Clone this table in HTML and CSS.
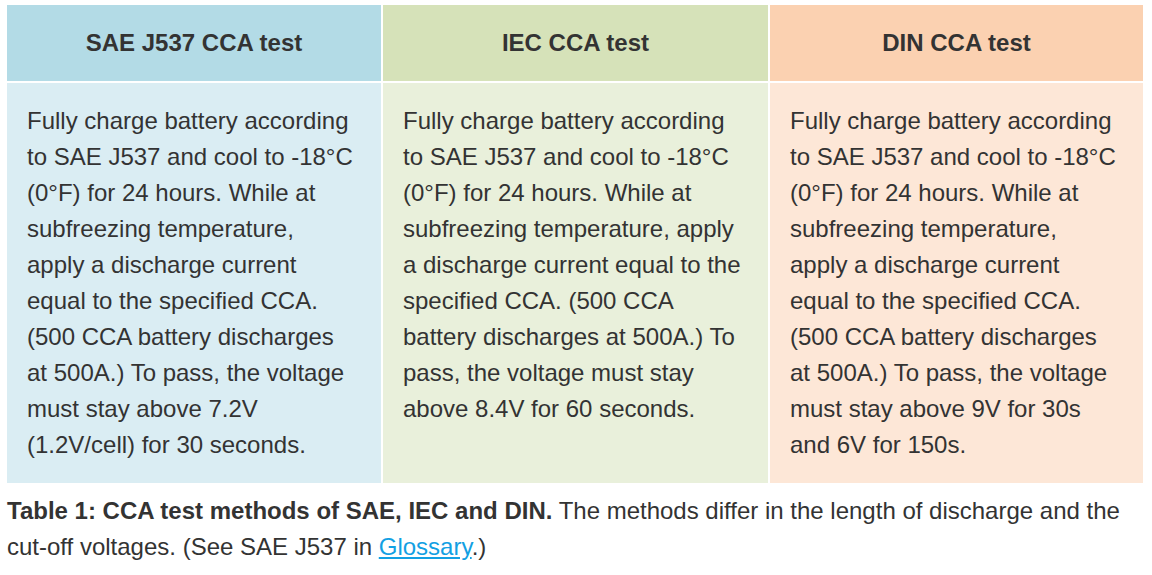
FILE: index.html
```html
<!DOCTYPE html>
<html>
<head>
<meta charset="utf-8">
<link rel="stylesheet" href="styles.css">
</head>
<body>
<div class="page">
  <div class="table">
    <div class="cell head blue">SAE J537 CCA test</div>
    <div class="cell head green">IEC CCA test</div>
    <div class="cell head orange">DIN CCA test</div>
    <div class="cell body blue">Fully charge battery according to SAE J537 and cool to -18°C (0°F) for 24 hours. While at subfreezing temperature, apply a discharge current equal to the specified CCA. (500 CCA battery discharges at 500A.) To pass, the voltage must stay above 7.2V (1.2V/cell) for 30 seconds.</div>
    <div class="cell body green">Fully charge battery according to SAE J537 and cool to -18°C (0°F) for 24 hours. While at subfreezing temperature, apply a discharge current equal to the specified CCA. (500 CCA battery discharges at 500A.) To pass, the voltage must stay above 8.4V for 60 seconds.</div>
    <div class="cell body orange">Fully charge battery according to SAE J537 and cool to -18°C (0°F) for 24 hours. While at subfreezing temperature, apply a discharge current equal to the specified CCA. (500 CCA battery discharges at 500A.) To pass, the voltage must stay above 9V for 30s and 6V for 150s.</div>
  </div>
  <p class="caption"><strong>Table 1: CCA test methods of SAE, IEC and DIN.</strong> The methods differ in the length of discharge and the cut-off voltages. (See SAE J537 in <a href="#">Glossary</a>.)</p>
</div>
</body>
</html>
```

FILE: styles.css
```css
html, body {
  margin: 0;
  padding: 0;
  background: #ffffff;
}
body {
  font-family: "Liberation Sans", Arial, sans-serif;
  font-size: 24px;
  line-height: 36px;
  color: #333333;
}
.page {
  padding: 5px 9px 0 7px;
}
.table {
  display: grid;
  grid-template-columns: 374px 385px 373px;
  grid-template-rows: 76px 400px;
  gap: 2px;
}
.cell {
  box-sizing: border-box;
}
.head {
  font-weight: bold;
  text-align: center;
  padding: 20px 10px;
}
.body {
  padding: 20px 25px 20px 20px;
}
.head.blue { background: #b3dbe6; }
.head.green { background: #d6e2b9; }
.head.orange { background: #fbd1b1; }
.body.blue { background: #daedf3; }
.body.green { background: #e9f0db; }
.body.orange { background: #fde7d7; }
.caption {
  margin: 10px 0 0 0;
}
.caption strong {
  font-weight: bold;
}
.caption a {
  color: #12a0e3;
  text-decoration: underline;
}
```
